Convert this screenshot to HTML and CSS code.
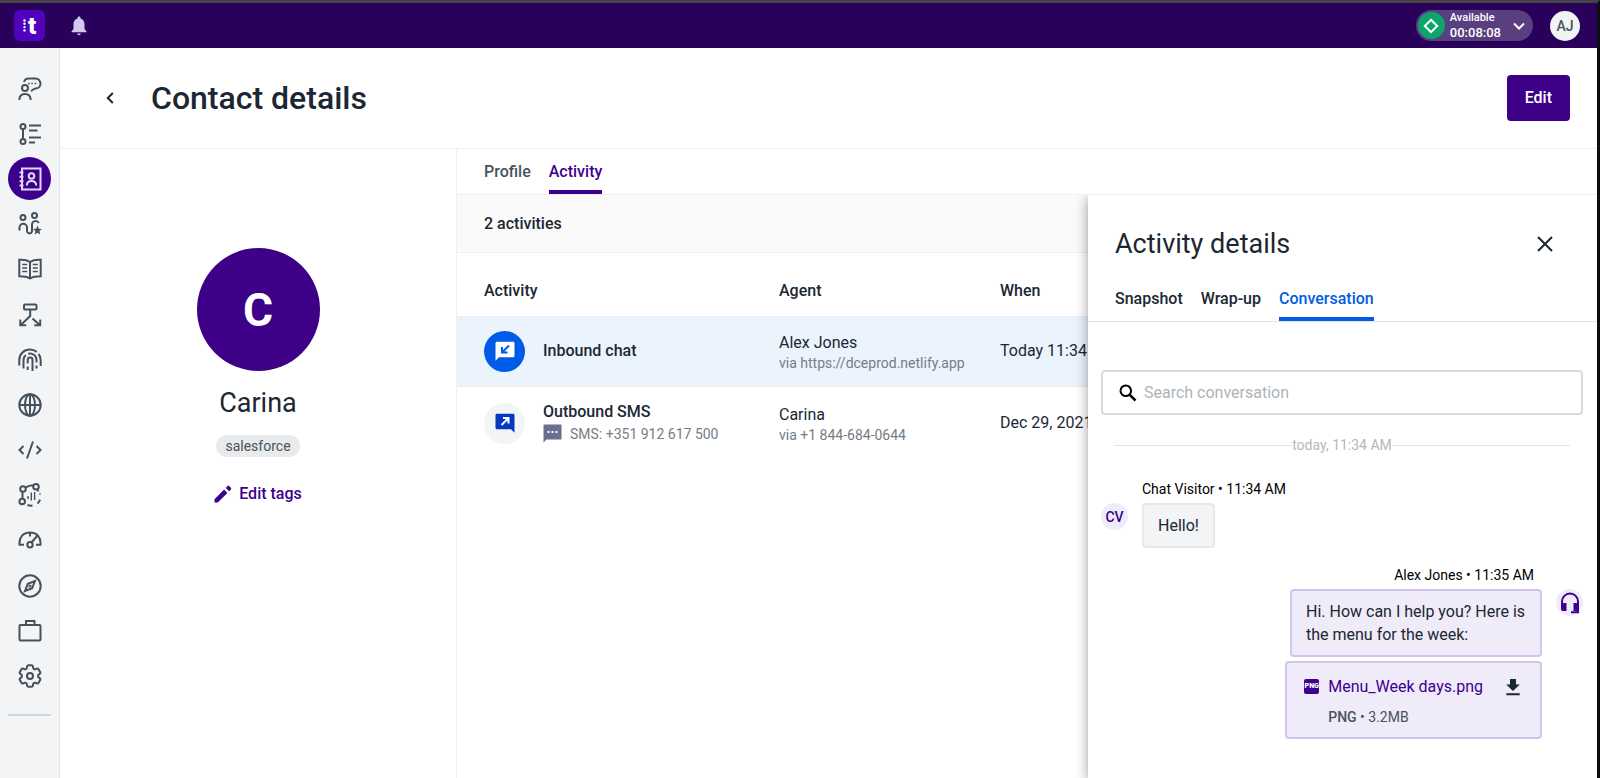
FILE: index.html
```html
<!DOCTYPE html>
<html lang="en">
<head>
  <meta charset="UTF-8" />
  <meta name="viewport" content="width=device-width, initial-scale=1.0" />
  <title>Contact details</title>
  <link rel="stylesheet" href="styles.css">
</head>
<body>

  <header class="topbar">
    <a href="#" class="logo" aria-label="Home">
      <svg width="3" height="13" viewBox="0 0 3 13"><circle cx="1.5" cy="1.500" r="1.200"/><circle cx="1.500" cy="4.800" r="1.200"/><circle cx="1.500" cy="8.100" r="1.200"/><circle cx="1.500" cy="11.400" r="1.200"/></svg>
      <span>t</span>
    </a>
    <button class="bell" aria-label="Notifications">
      <svg width="16" height="20" viewBox="0 0 16 20"><path d="M8 .5c-.9 0-1.500.6-1.500 1.400v.5C4 3.100 2.500 5.300 2.500 8v5L.5 15.500v.8h15v-.8L13.500 13V8c0-2.700-1.500-4.900-4-5.600v-.5C9.500 1.100 8.900.5 8 .5zM6.200 17.500c.2 1 .9 1.700 1.800 1.700s1.600-.7 1.800-1.700z"/></svg>
    </button>
    <button class="status">
      <span class="status-icon">
        <svg width="16" height="16" viewBox="0 0 16 16"><path d="M8 1.800 14.200 8 8 14.200 1.800 8z" fill="none" stroke="#fff" stroke-width="2"/></svg>
      </span>
      <span class="status-text">
        <span class="status-name">Available</span>
        <span class="status-time">00:08:08</span>
      </span>
      <svg width="12" height="8" viewBox="0 0 12 8"><path d="M1 1.500l5 5 5-5" fill="none" stroke="#fff" stroke-width="2"/></svg>
    </button>
    <button class="user">AJ</button>
  </header>

  <div class="layout">
    <nav class="sidebar">
      <ul class="menu">
        <li><a href="#" aria-label="Conversations"><svg viewBox="0 0 24 24"><circle cx="7" cy="11" r="3"/><path d="M1.300 23c.1-4 2.500-6 5.700-6s5.600 2 5.700 6M6 5c.6-2.100 2.400-3.500 4.500-3.500h7a5 5 0 0 1 0 10c-1.500.2-2.600 1.500-4.500 2.500"/><path d="M10 6.500h1.600M13.300 6.500h1.600M16.600 6.500h1.600" stroke-width="1.600"/></svg></a></li>
        <li><a href="#" aria-label="Queues"><svg viewBox="0 0 24 24"><circle cx="5" cy="4.500" r="2.500"/><circle cx="5" cy="19.500" r="2.500"/><path d="M5 7v10M11 3.500h12M11 8.500h8.500M11 15.500h12M11 20.500h6"/></svg></a></li>
        <li><a href="#" class="active" aria-label="Contacts"><svg viewBox="0 0 24 24"><path d="M4 1.500h18.500v21H4zM1.500 5.500h4M1.500 9.800h4M1.500 14.200h4M1.500 18.500h4"/><circle cx="13.500" cy="9" r="2.800"/><path d="M8.800 18.500c0-3 2-4.600 4.700-4.600s4.700 1.600 4.700 4.600"/></svg></a></li>
        <li><a href="#" aria-label="Teams"><svg viewBox="0 0 24 24"><circle cx="5" cy="5.500" r="2.500"/><circle cx="16.500" cy="3.500" r="2.500"/><path d="M1.500 18.500V15.500a3.700 3.700 0 0 1 7.500 0V19.500a2.600 2.600 0 0 0 5 0V12.500a3.600 3.600 0 0 1 6.800-1.500"/><path class="solid" d="M19.500 13.500l1.300 3.200 3.300.2-2.600 2.200.8 3.400-2.800-1.800-2.800 1.800.8-3.400-2.600-2.200 3.300-.2z"/></svg></a></li>
        <li><a href="#" aria-label="Knowledge base"><svg viewBox="0 0 24 24"><path d="M12 5C9.500 3.300 5.500 2.500 1.300 2.800v16.400c4.200 0 8 .3 10.700 2.300 2.700-2 6.500-2.300 10.700-2.300V2.800C18.500 2.500 14.500 3.300 12 5zM12 5v16.500"/><path d="M4.200 7.500h5M4.200 11h5M4.200 14.500h5M14.800 7.500h5M14.800 11h5M14.800 14.500h5" stroke-width="1.300"/></svg></a></li>
        <li><a href="#" aria-label="Routing"><svg viewBox="0 0 24 24"><rect x="6" y="1.500" width="12.500" height="5" rx="1"/><path d="M12.200 6.500v6.500L3 21.800M14.500 15.500l7 6.300M2.300 16.500v5.700h5.900M22.200 16.500v5.700h-5.900"/></svg></a></li>
        <li><a href="#" aria-label="Identity"><svg viewBox="0 0 24 24"><path d="M1.300 17.500V12C1.300 6 6 1.500 12 1.500c2.600 0 4.900.9 6.800 2.400M20.500 6c1.500 1.800 2.200 3.800 2.200 6v6M5.500 20.500V12a6.500 6.500 0 0 1 2.400-5M10.200 5.700A6.500 6.500 0 0 1 18.500 12v2.500M18.500 17.500v3M9.700 22v-3.500M9.700 15.500V12a2.400 2.400 0 0 1 4.800 0v11"/></svg></a></li>
        <li><a href="#" aria-label="Web"><svg viewBox="0 0 24 24"><circle cx="12" cy="12" r="10.700"/><ellipse cx="12" cy="12" rx="5" ry="10.700"/><path d="M12 1.300v21.400M1.300 12h21.400"/></svg></a></li>
        <li><a href="#" aria-label="Developer"><svg viewBox="0 0 24 24"><path d="M5.500 8l-4 4 4 4M18.500 8l4 4-4 4M15 3.500l-6 17"/></svg></a></li>
        <li><a href="#" aria-label="Workflows"><svg viewBox="0 0 24 24"><circle cx="5" cy="6" r="2.800"/><circle cx="18" cy="3.800" r="2.800"/><circle cx="4.200" cy="18.500" r="2.800"/><path d="M7.700 4.800c2-2 4.500-2.800 7.500-2.200M4.500 9v6.500M19.500 6.500l.8 2M9.500 22c2 .8 3.500.9 5 .6M19.500 20.500c1.200-1 2-2.300 2.600-3.800M22 10.500v1"/><path d="M10 13v3M13.300 9.500v8M16.600 9v8" stroke-width="1.400"/></svg></a></li>
        <li><a href="#" aria-label="Performance"><svg viewBox="0 0 24 24"><path d="M6 15.800H1.500C.8 8.500 5 3.500 12 3.500s11.200 5 10.500 12.300H18M12 3.500v4M13.500 13.500l6-7"/><circle cx="12" cy="15.800" r="2.700"/></svg></a></li>
        <li><a href="#" aria-label="Explore"><svg viewBox="0 0 24 24"><circle cx="12" cy="12" r="10.700"/><path d="M17 7l-2.800 7.200L7 17l2.800-7.200z"/><circle cx="12" cy="12" r=".6"/></svg></a></li>
        <li><a href="#" aria-label="Workspace"><svg viewBox="0 0 24 24"><rect x="1.500" y="6" width="21" height="15.500" rx="1"/><path d="M8 6V2h8.500v4"/></svg></a></li>
        <li><a href="#" aria-label="Settings"><svg viewBox="2 2 20 20"><path stroke-width="1.700" d="M9.594 3.940c.09-.542.56-.94 1.110-.94h2.593c.55 0 1.020.398 1.110.94l.213 1.281c.063.374.313.686.645.87.074.04.147.083.22.127.325.196.72.257 1.075.124l1.217-.456a1.125 1.125 0 0 1 1.370.49l1.296 2.247a1.125 1.125 0 0 1-.26 1.431l-1.003.827c-.293.241-.438.613-.43.992a7.723 7.723 0 0 1 0 .255c-.008.378.137.75.43.991l1.004.827c.424.35.534.955.26 1.430l-1.298 2.247a1.125 1.125 0 0 1-1.369.491l-1.217-.456c-.355-.133-.75-.072-1.076.124a6.470 6.470 0 0 1-.22.128c-.331.183-.581.495-.644.869l-.213 1.281c-.09.543-.56.94-1.110.94h-2.594c-.55 0-1.019-.398-1.110-.94l-.213-1.281c-.062-.374-.312-.686-.644-.87a6.520 6.520 0 0 1-.22-.127c-.325-.196-.72-.257-1.076-.124l-1.217.456a1.125 1.125 0 0 1-1.369-.49l-1.297-2.247a1.125 1.125 0 0 1 .26-1.431l1.004-.827c.292-.24.437-.613.43-.991a6.932 6.932 0 0 1 0-.255c.007-.38-.138-.751-.43-.992l-1.004-.827a1.125 1.125 0 0 1-.26-1.430l1.297-2.247a1.125 1.125 0 0 1 1.370-.491l1.216.456c.356.133.751.072 1.076-.124.072-.044.146-.086.22-.128.332-.183.582-.495.644-.869l.214-1.280Z"/><circle cx="12" cy="12" r="2.500" stroke-width="1.700"/></svg></a></li>
      </ul>
    </nav>

    <main class="page">
      <div class="page-header">
        <button class="back" aria-label="Back">
          <svg width="8" height="12" viewBox="0 0 8 12"><path d="M6.800 1L1.800 6l5 5" fill="none" stroke="#1b2733" stroke-width="2"/></svg>
        </button>
        <h1>Contact details</h1>
        <button class="btn">Edit</button>
      </div>

      <div class="page-body">
        <aside class="contact">
          <div class="contact-avatar">C</div>
          <h2>Carina</h2>
          <span class="tag">salesforce</span>
          <button class="edit-tags">
            <svg width="18" height="18" viewBox="0 0 18 18"><path d="M.5 14.200V17.500h3.300L13.400 7.900 10.100 4.600zM16.900 4.400c.5-.5.5-1.100 0-1.600L15.200 1.100c-.5-.5-1.100-.5-1.600 0l-1.800 1.800 3.300 3.300z"/></svg>
            Edit tags
          </button>
        </aside>

        <section class="content">
          <div class="tabs">
            <a href="#">Profile</a>
            <a href="#" class="active">Activity</a>
          </div>

          <div class="activities">
            <div class="count">2 activities</div>
            <table>
              <thead>
                <tr>
                  <th class="col-activity">Activity</th>
                  <th class="col-agent">Agent</th>
                  <th>When</th>
                </tr>
              </thead>
              <tbody>
                <tr class="selected">
                  <td>
                    <div class="activity">
                      <span class="activity-icon blue">
                        <svg width="20" height="20" viewBox="0 0 20 20"><path d="M2 .8h16c.8 0 1.500.6 1.500 1.500v12.400c0 .8-.7 1.500-1.500 1.500H4L.5 19.700V2.300C.5 1.400 1.200.8 2 .8z" fill="#fff"/><path d="M14 4.500L7.500 11M7 6v5.500h5.500" fill="none" stroke="#005ce6" stroke-width="2"/></svg>
                      </span>
                      <strong>Inbound chat</strong>
                    </div>
                  </td>
                  <td>Alex Jones<small>via https://dceprod.netlify.app</small></td>
                  <td>Today 11:34 AM</td>
                </tr>
                <tr>
                  <td>
                    <div class="activity">
                      <span class="activity-icon">
                        <svg width="20" height="20" viewBox="0 0 20 20"><path d="M18 .8H2C1.200.8.5 1.400.5 2.300v12.400c0 .8.7 1.500 1.500 1.500h14l3.500 3.500V2.300c0-.9-.7-1.500-1.500-1.500z" fill="#0339c0"/><path d="M6.500 12L13 5.500M8 5h5.500v5.500" fill="none" stroke="#fff" stroke-width="2"/></svg>
                      </span>
                      <div class="activity-text">
                        <strong>Outbound SMS</strong>
                        <small class="sms">
                          <svg width="19" height="19" viewBox="0 0 19 19"><path d="M1.500.5h16c.6 0 1 .4 1 1v13c0 .6-.4 1-1 1H3.500l-3 3v-17c0-.6.4-1 1-1z" fill="#68708f"/><path d="M4.500 8h2M8.500 8h2M12.500 8h2" stroke="#fff" stroke-width="2"/></svg>
                          SMS: +351 912 617 500
                        </small>
                      </div>
                    </div>
                  </td>
                  <td>Carina<small>via +1 844-684-0644</small></td>
                  <td>Dec 29, 2021</td>
                </tr>
              </tbody>
            </table>

            <!-- Activity details drawer -->
            <div class="drawer">
              <div class="drawer-header">
                <h2>Activity details</h2>
                <button class="close" aria-label="Close">
                  <svg width="16" height="16" viewBox="0 0 16 16"><path d="M1 1l14 14M15 1L1 15" fill="none" stroke="#1b2733" stroke-width="2"/></svg>
                </button>
              </div>
              <div class="drawer-tabs">
                <a href="#">Snapshot</a>
                <a href="#">Wrap-up</a>
                <a href="#" class="active">Conversation</a>
              </div>

              <div class="conversation">
                <label class="search">
                  <svg width="18" height="18" viewBox="0 0 18 18"><circle cx="6.800" cy="6.800" r="5.300" fill="none" stroke="#000" stroke-width="2"/><path d="M10.800 10.800l5.700 5.700" stroke="#000" stroke-width="2.500"/></svg>
                  <input type="text" placeholder="Search conversation" aria-label="Search conversation">
                </label>

                <div class="divider">today, 11:34 AM</div>

                <div class="message">
                  <span class="avatar">CV</span>
                  <div class="message-body">
                    <div class="meta">Chat Visitor • 11:34 AM</div>
                    <div class="bubble">Hello!</div>
                  </div>
                </div>

                <div class="message mine">
                  <div class="message-body">
                    <div class="meta">Alex Jones • 11:35 AM</div>
                    <div class="bubble">Hi. How can I help you? Here is the menu for the week:</div>
                    <div class="bubble file">
                      <span class="file-type">PNG</span>
                      <a href="#" class="file-name">Menu_Week days.png</a>
                      <button class="download" aria-label="Download">
                        <svg width="14" height="18" viewBox="0 0 14 18"><path d="M4 1h6v5.500h3.800L7 13 .2 6.500H4zM.3 15.300h13.400v2H.3z" fill="#1b2733"/></svg>
                      </button>
                      <span class="file-size"><b>PNG</b> • 3.2MB</span>
                    </div>
                  </div>
                  <span class="avatar">
                    <svg width="20" height="22" viewBox="0 0 20 22"><path d="M2 12.500V9.500a8 8 0 0 1 16 0v10.700h-7" fill="none" stroke="#3d0091" stroke-width="2"/><path d="M1 11h5.500v8H3a2 2 0 0 1-2-2zM13.500 11H19v8h-5.500z" fill="#3d0091"/></svg>
                  </span>
                </div>
              </div>
            </div>
          </div>
        </section>
      </div>
    </main>
  </div>

</body>
</html>
```
FILE: styles.css
```css
* { box-sizing: border-box; }
body {
  font-family: Roboto, sans-serif;
  font-size: 16px;
  line-height: 24px;
  color: #1b2733;
  background: #fff;
  margin: 0;
  min-height: 100vh;
  border-top: 3px solid #454347;
  border-right: 3px solid #0c0d12;
  display: flex;
  flex-direction: column;
}
h1, h2 { margin: 0; }
a { color: inherit; text-decoration: none; }
button {
  font: inherit;
  color: inherit;
  background: none;
  border: 0;
  padding: 0;
  display: flex;
  align-items: center;
  cursor: pointer;
}
svg { display: block; flex: none; }
strong { font-weight: 500; }
small {
  display: block;
  font-size: 14px;
  line-height: 18px;
  color: #757d85;
}

/* Top bar */
.topbar {
  background: #29005a;
  height: 45px;
  padding: 0 17px 0 14px;
  display: flex;
  align-items: center;
}
.logo {
  width: 31px;
  height: 31px;
  border-radius: 6px;
  background: #5102bd;
  color: #fff;
  font-size: 24px;
  font-weight: 900;
  line-height: 30px;
  display: flex;
  align-items: center;
  justify-content: center;
  gap: 2px;
}
.logo svg { fill: #fff; }
.bell { margin-left: 26px; }
.bell svg { fill: #d5c8ef; }
.status {
  margin-left: auto;
  height: 31px;
  padding: 0 8px 0 2px;
  border-radius: 16px;
  background: #5a3f80;
  color: #fff;
}
.status-icon {
  width: 27px;
  height: 27px;
  border-radius: 50%;
  background: #0ca66d;
  display: flex;
  align-items: center;
  justify-content: center;
}
.status-text {
  display: flex;
  flex-direction: column;
  text-align: left;
  margin: 0 12px 0 5px;
  font-weight: 500;
}
.status-name { font-size: 11px; line-height: 14px; }
.status-time { font-size: 13px; line-height: 15px; }
.user {
  margin-left: 17px;
  width: 30px;
  height: 30px;
  border-radius: 50%;
  background: #f2f3f5;
  color: #47525d;
  font-size: 14px;
  font-weight: 500;
  justify-content: center;
}

/* Sidebar */
.layout {
  flex: 1;
  display: flex;
}
.sidebar {
  width: 60px;
  padding: 19px 8px 0;
  background: #f2f4f6;
  border-right: 1px solid #e4e7e9;
}
.menu {
  list-style: none;
  margin: 0;
  padding: 0 0 16px;
  border-bottom: 2px solid #d3d7da;
  height: 649px;
  display: flex;
  flex-direction: column;
  justify-content: space-between;
}
.menu a {
  width: 43px;
  height: 43px;
  border-radius: 50%;
  color: #45515c;
  display: flex;
  align-items: center;
  justify-content: center;
}
.menu a.active { background: #3d008d; color: #e2d6f5; }
.menu svg {
  width: 24px;
  height: 24px;
  fill: none;
  stroke: currentColor;
  stroke-width: 2;
}
.menu .solid { fill: currentColor; stroke: none; }

/* Page */
.page {
  flex: 1;
  display: flex;
  flex-direction: column;
}
.page-header {
  height: 101px;
  padding: 0 27px 0 46px;
  border-bottom: 1px solid #eeeff0;
  display: flex;
  align-items: center;
}
.back { margin-right: 37px; }
h1 {
  font-size: 32px;
  line-height: 40px;
  font-weight: 500;
}
.btn {
  margin-left: auto;
  padding: 0 18px;
  height: 46px;
  border-radius: 4px;
  background: #3d0087;
  color: #fff;
  font-weight: 500;
}
.page-body {
  flex: 1;
  display: flex;
}
.contact {
  width: 397px;
  padding-top: 99px;
  border-right: 1px solid #eeeff0;
  display: flex;
  flex-direction: column;
  align-items: center;
}
.contact-avatar {
  width: 123px;
  height: 123px;
  border-radius: 50%;
  background: #3d0087;
  color: #fff;
  font-size: 46px;
  font-weight: 700;
  display: flex;
  align-items: center;
  justify-content: center;
}
h2 {
  font-size: 27px;
  line-height: 32px;
  font-weight: 400;
}
.contact h2 { margin-top: 16px; }
.tag {
  margin-top: 16px;
  padding: 0 9px;
  border-radius: 11px;
  background: #e8eaec;
  color: #47525d;
  font-size: 14px;
  line-height: 22px;
}
.edit-tags {
  margin-top: 25px;
  gap: 7px;
  color: #3d0091;
  font-weight: 500;
}
.edit-tags svg { fill: #3d0091; }

/* Activity list */
.content {
  flex: 1;
  display: flex;
  flex-direction: column;
}
.tabs {
  display: flex;
  gap: 18px;
  padding: 0 27px;
  border-bottom: 1px solid #eeeff0;
  font-weight: 500;
  color: #47525d;
}
.tabs a {
  padding: 11px 0 6px;
  border-bottom: 4px solid transparent;
}
.tabs a.active { color: #3d0091; border-color: #3d0091; }
.activities {
  flex: 1;
  position: relative;
  overflow: hidden;
}
.count {
  padding: 17px 27px 16px;
  background: #fafafa;
  border-bottom: 1px solid #eeeff0;
  font-weight: 500;
}
table {
  width: 100%;
  border-collapse: collapse;
  table-layout: fixed;
}
.col-activity { width: 322px; }
.col-agent { width: 221px; }
th, td {
  text-align: left;
  white-space: nowrap;
}
th {
  height: 63px;
  padding: 14px 0 0;
  font-weight: 500;
}
td { padding: 14px 0; }
th:first-child, td:first-child { padding-left: 27px; }
tbody tr { border-top: 1px solid #eeeff0; }
tr.selected { background: #ebf3fd; }
td small { margin-top: -1px; }
.activity {
  display: flex;
  align-items: center;
  gap: 18px;
}
.activity-text { line-height: 22px; }
.activity-icon {
  width: 41px;
  height: 41px;
  border-radius: 50%;
  background: #f2f4f5;
  display: flex;
  align-items: center;
  justify-content: center;
}
.activity-icon.blue { background: #005ce6; }
.sms {
  display: flex;
  align-items: center;
  gap: 8px;
  line-height: 24px;
}

/* Drawer */
.drawer {
  position: absolute;
  top: 0;
  right: 0;
  bottom: 0;
  width: 509px;
  background: #fff;
  box-shadow: 0 3px 12px rgba(0, 0, 0, 0.4);
}
.drawer-header {
  display: flex;
  align-items: center;
  justify-content: space-between;
  padding: 33px 44px 27px 27px;
}
.drawer-tabs {
  display: flex;
  gap: 18px;
  padding: 0 27px;
  border-bottom: 1px solid #e2e5e8;
  font-weight: 500;
}
.drawer-tabs a {
  padding-bottom: 6px;
  border-bottom: 4px solid transparent;
}
.drawer-tabs a.active { color: #005ce6; border-color: #005ce6; }
.conversation { padding: 48px 14px 16px 13px; }
.search {
  display: flex;
  align-items: center;
  gap: 7px;
  height: 45px;
  padding: 0 16px;
  border: 2px solid #d6dbe0;
  border-radius: 4px;
}
.search input {
  flex: 1;
  border: 0;
  padding: 0;
  outline: 0;
  background: none;
  font: inherit;
}
.search input::placeholder { color: #aeb3b8; }
.divider {
  display: flex;
  align-items: center;
  margin: 20px 13px 24px;
  font-size: 14px;
  line-height: 20px;
  color: #b3b8bd;
}
.divider::before, .divider::after {
  content: "";
  flex: 1;
  height: 1px;
  background: #e2e5e8;
}
.message {
  display: flex;
  align-items: flex-start;
  gap: 14px;
  margin-bottom: 17px;
}
.message-body {
  display: flex;
  flex-direction: column;
  align-items: flex-start;
  gap: 4px;
}
.mine { justify-content: flex-end; }
.mine .message-body { align-items: flex-end; }
.meta {
  font-size: 14px;
  line-height: 20px;
  color: #000;
}
.mine .meta { padding-right: 8px; }
.avatar {
  width: 27px;
  height: 27px;
  margin-top: 24px;
  border-radius: 50%;
  background: #efebf8;
  color: #3d0091;
  font-size: 14px;
  font-weight: 500;
  display: flex;
  align-items: center;
  justify-content: center;
}
.bubble {
  max-width: 252px;
  padding: 9px 14px;
  border: 2px solid #e6e8ea;
  border-radius: 4px;
  background: #f2f4f5;
  line-height: 23px;
}
.mine .bubble {
  border-color: #d2c4ee;
  background: #efebf8;
}
.mine .file {
  max-width: none;
  display: grid;
  grid-template-columns: 15px auto 14px;
  align-items: center;
  column-gap: 9px;
  row-gap: 8px;
  padding: 12px 20px 8px 17px;
}
.file-type {
  border-radius: 2px;
  background: #3d0091;
  color: #fff;
  font-size: 7px;
  font-weight: 900;
  line-height: 15px;
  text-align: center;
}
.file-name { padding-right: 14px; color: #3d0091; }
.file-size {
  grid-column: 2;
  font-size: 14px;
  color: #47525d;
}
.file-size b { font-weight: 500; }
```
